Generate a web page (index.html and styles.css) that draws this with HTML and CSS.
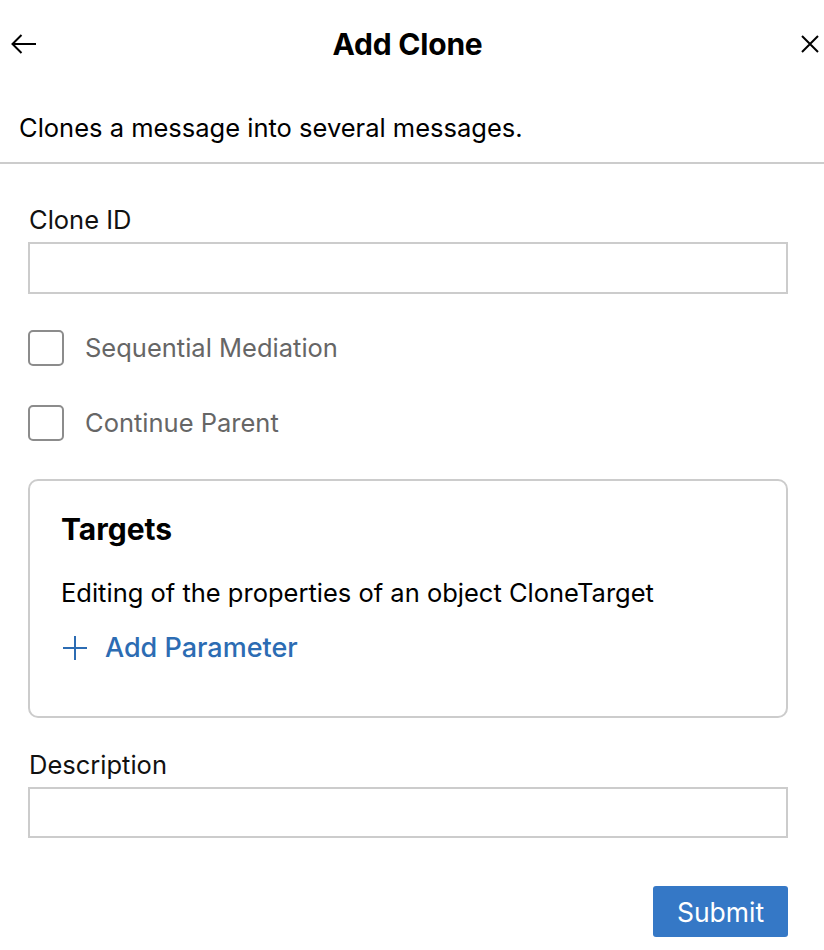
FILE: index.html
```html
<!DOCTYPE html>
<html>
<head>
<meta charset="utf-8">
<link rel="stylesheet" href="styles.css">
</head>
<body>
<div class="panel">
  <header class="header">
    <button class="icon-btn back" aria-label="Back">
      <svg width="26" height="20" viewBox="0 0 26 20"><path d="M1.5 10H25M10.5 1L1.5 10L10.5 19" fill="none" stroke="#000" stroke-width="2"/></svg>
    </button>
    <h1 class="title">Add Clone</h1>
    <button class="icon-btn close" aria-label="Close">
      <svg width="20" height="20" viewBox="0 0 20 20"><path d="M2 2L18 18M18 2L2 18" fill="none" stroke="#000" stroke-width="2"/></svg>
    </button>
  </header>
  <p class="intro">Clones a message into several messages.</p>
  <div class="form">
    <label class="field">
      <span class="label">Clone ID</span>
      <input class="input" type="text">
    </label>
    <div class="checks">
      <label class="check"><span class="box"></span><span class="check-label">Sequential Mediation</span></label>
      <label class="check"><span class="box"></span><span class="check-label">Continue Parent</span></label>
    </div>
    <section class="card">
      <h2 class="card-title">Targets</h2>
      <p class="card-text">Editing of the properties of an object CloneTarget</p>
      <div class="add">
        <svg width="26" height="26" viewBox="0 0 26 26"><path d="M13 1V25M1 13H25" fill="none" stroke="#2c6cb3" stroke-width="2"/></svg>
        <span>Add Parameter</span>
      </div>
    </section>
    <label class="field desc">
      <span class="label">Description</span>
      <input class="input" type="text">
    </label>
    <div class="actions">
      <button class="submit">Submit</button>
    </div>
  </div>
</div>
</body>
</html>
```

FILE: styles.css
```css
* { box-sizing: border-box; }
html, body { margin: 0; padding: 0; background: #fff; }
body { font-family: Inter, "Noto Sans", sans-serif; color: #000; }
.panel { width: 824px; height: 950px; }
.header {
  height: 90px;
  display: flex;
  align-items: center;
  justify-content: space-between;
  padding: 0 4px 0 11px;
}
.icon-btn { background: none; border: 0; padding: 0; display: flex; cursor: pointer; }
.back { margin-top: -2px; }
.close { margin-top: -2px; }
.title { font-size: 30px; font-weight: 700; margin: -2px 22px 0 0; line-height: 36px; letter-spacing: -0.2px; }
.intro {
  margin: 0;
  padding: 24px 19px 20px;
  font-size: 25.5px;
  line-height: 28px;
  border-bottom: 2px solid #cccccc;
}
.form { padding: 40px 36px 0 28px; display: flex; flex-direction: column; }
.field { display: flex; flex-direction: column; }
.label { font-size: 25.5px; line-height: 28px; margin: 2px 0 8px 1px; color: #111; }
.input {
  height: 52px;
  border: 2px solid #cccccc;
  border-radius: 0;
  font-size: 20px;
  outline: none;
}
.checks { display: flex; flex-direction: column; gap: 39px; margin-top: 36px; }
.check { display: flex; align-items: center; gap: 21px; }
.box { width: 36px; height: 36px; border: 2px solid #8c8c8c; border-radius: 5px; flex: none; }
.check-label { font-size: 25.5px; color: #666; line-height: 28px; }
.card {
  margin-top: 38px;
  border: 2px solid #cccccc;
  border-radius: 10px;
  padding: 32px 31px 50px;
  height: 239px;
}
.card-title { margin: 0; font-size: 30px; font-weight: 700; line-height: 32px; }
.card-text { margin: 34px 0 0; font-size: 25.5px; line-height: 28px; }
.add { display: flex; align-items: center; gap: 17px; margin-top: 25px; margin-left: 1px; color: #2c6cb3; font-size: 27px; line-height: 32px; font-weight: 500; }
.desc { margin-top: 31px; }
.desc .input { height: 51px; }
.actions { display: flex; justify-content: flex-end; margin-top: 48px; }
.submit {
  width: 135px;
  height: 51px;
  border: 0;
  border-radius: 3px;
  background: #3578c6;
  color: #fff;
  font-family: Inter, sans-serif;
  font-size: 26.5px;
}
```
